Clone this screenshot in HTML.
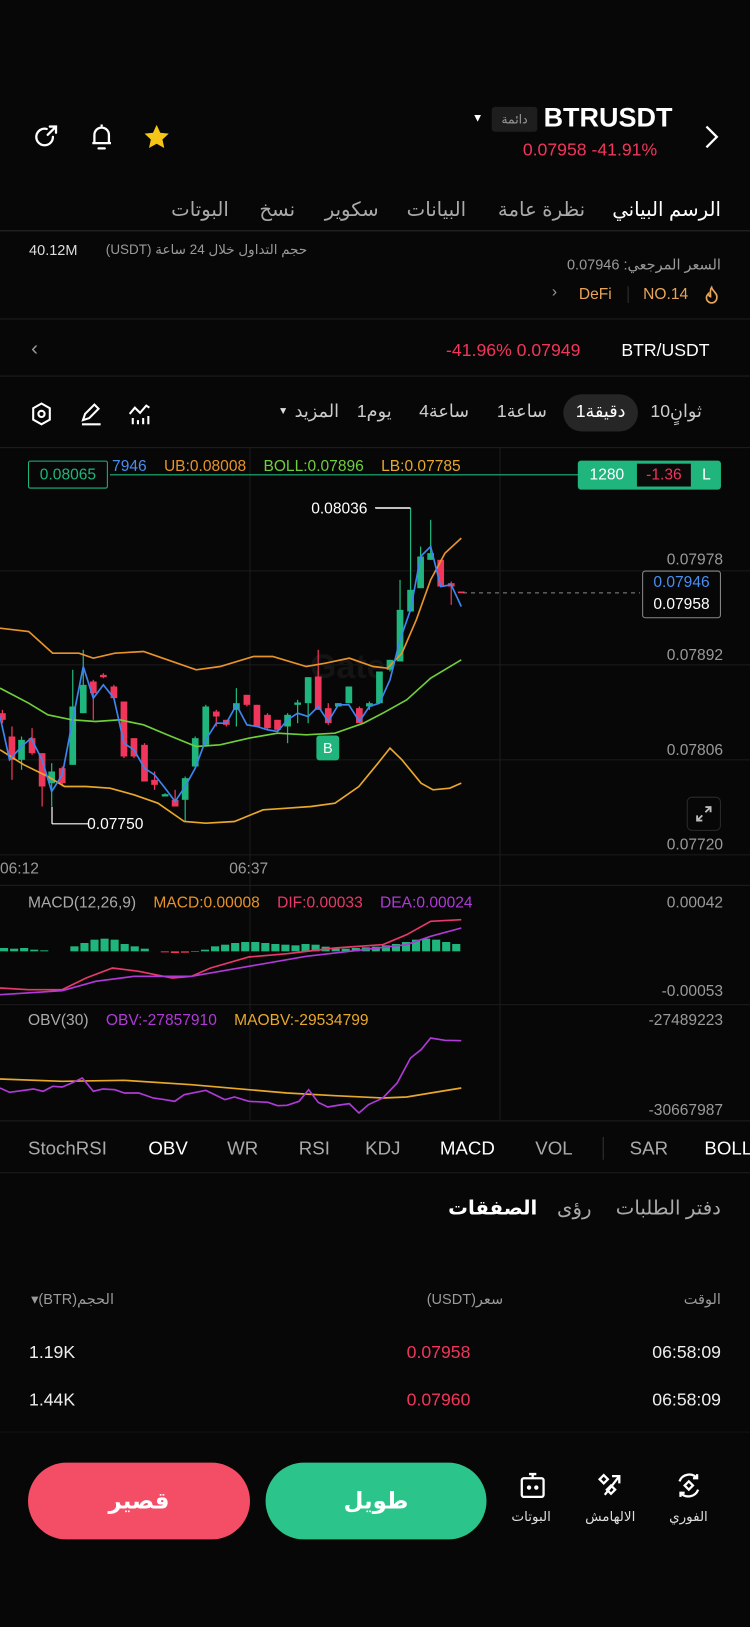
<!DOCTYPE html>
<html><head><meta charset="utf-8">
<style>
html,body{margin:0;padding:0;background:#070707;width:750px;height:1626px;overflow:hidden}
#w{position:absolute;left:0;top:0;width:723px;height:1568px;transform:scale(1.03735);transform-origin:0 0;font-family:"Liberation Sans","DejaVu Sans",sans-serif;color:#eee}
.a{position:absolute;white-space:nowrap}
.r{text-align:right}
.g{color:#9a9a9a}
.red{color:#f0365a}
.hl{position:absolute;left:0;width:723px;height:1px;background:#1e1e1e}
</style></head><body><div id="w">

<svg class="a" style="left:31px;top:119px" width="26" height="26" viewBox="0 0 26 26" fill="none" stroke="#fff" stroke-width="2.2" stroke-linecap="round"><path d="M20 13a8 8 0 1 1-6-7.7"/><path d="M15 11l8-8M17 3h6v6"/></svg>
<svg class="a" style="left:85px;top:117px" width="26" height="30" viewBox="0 0 26 30" fill="none" stroke="#fff" stroke-width="2.2"><path d="M13 3v2M6 21V13a7 7 0 0 1 14 0v8H4h18"/><path d="M10 26h6" stroke-linecap="round"/></svg>
<svg class="a" style="left:137px;top:118px" width="28" height="28" viewBox="0 0 24 24"><path d="M12 2l3 6.5 7 .8-5.2 4.8 1.5 7L12 17.6 5.7 21.1l1.5-7L2 9.3l7-.8z" fill="#f5c518"/></svg>
<div class="a" style="left:455px;top:108px;font-size:11px;color:#fff">▼</div>
<div class="a" style="left:474px;top:103px;width:44px;height:24px;background:#1e1e1e;border-radius:3px;font-size:12px;color:#999;text-align:center;line-height:24px">دائمة</div>
<div class="a" style="left:524px;top:98px;font-size:26px;font-weight:bold;color:#fff">BTRUSDT</div>
<div class="a red" style="left:504px;top:135px;font-size:17px">0.07958 -41.91%</div>
<svg class="a" style="left:678px;top:119px" width="16" height="26" viewBox="0 0 16 26" fill="none" stroke="#fff" stroke-width="2.2"><path d="M3 3l10 10-10 10"/></svg>

<div class="a" style="right:28px;top:191px;font-size:19px;color:#fff;direction:rtl">الرسم البياني</div>
<div class="a g" style="left:480px;top:191px;font-size:19px;color:#aaa">نظرة عامة</div>
<div class="a g" style="left:392px;top:191px;font-size:19px;color:#aaa">البيانات</div>
<div class="a g" style="left:313px;top:191px;font-size:19px;color:#aaa">سكوير</div>
<div class="a g" style="left:250px;top:191px;font-size:19px;color:#aaa">نسخ</div>
<div class="a g" style="left:165px;top:191px;font-size:19px;color:#aaa">البوتات</div>
<div class="hl" style="top:222px;background:#2a2a2a"></div>

<div class="a" style="left:28px;top:233px;font-size:14px;color:#ddd">40.12M</div>
<div class="a g" style="left:102px;top:233px;font-size:13px;direction:rtl">حجم التداول خلال 24 ساعة (USDT)</div>
<div class="a g" style="right:28px;top:247px;font-size:14px">السعر المرجعي: 0.07946</div>
<svg class="a" style="left:678px;top:275px" width="16" height="18" viewBox="0 0 16 18" fill="none" stroke="#e8a45a" stroke-width="1.6"><path d="M8 2c1 4 6 6 5 10a5 5 0 0 1-10 0c0-2 1-3 2-4 0 2 1 3 2 3 0-3-1-6 1-9z"/></svg>
<div class="a" style="left:620px;top:275px;font-size:15px;color:#e8a45a">NO.14</div>
<div class="a" style="left:605px;top:276px;width:1px;height:16px;background:#333"></div>
<div class="a" style="left:558px;top:275px;font-size:15px;color:#e8a45a">DeFi</div>
<div class="a g" style="left:532px;top:273px;font-size:15px">›</div>
<div class="hl" style="top:307px"></div>

<div class="a g" style="left:30px;top:325px;font-size:20px">‹</div>
<div class="a red" style="left:430px;top:328px;font-size:17px">-41.96% 0.07949</div>
<div class="a" style="left:599px;top:328px;font-size:17px;color:#fff">BTR/USDT</div>
<div class="hl" style="top:362px"></div>

<svg class="a" style="left:29px;top:387px" width="22" height="24" viewBox="0 0 22 24" fill="none" stroke="#fff" stroke-width="2"><path d="M11 2l8 4.5v11L11 22l-8-4.5v-11z"/><circle cx="11" cy="12" r="3"/></svg>
<svg class="a" style="left:76px;top:387px" width="24" height="24" viewBox="0 0 24 24" fill="none" stroke="#fff" stroke-width="2"><path d="M4 18l2-6 9-9 4 4-9 9-6 2zM3 22h18"/></svg>
<svg class="a" style="left:123px;top:387px" width="24" height="24" viewBox="0 0 24 24" fill="none" stroke="#fff" stroke-width="2"><path d="M2 12l5-6 5 5 6-7 3 2M5 22v-6M10 22v-4M15 22v-6M20 22v-8"/></svg>
<div class="a" style="left:268px;top:391px;font-size:10px;color:#ddd">▼</div>
<div class="a" style="left:284px;top:387px;font-size:17px;color:#ccc">المزيد</div>
<div class="a" style="left:344px;top:387px;font-size:17px;color:#ccc">1يوم</div>
<div class="a" style="left:404px;top:387px;font-size:17px;color:#ccc">4ساعة</div>
<div class="a" style="left:479px;top:387px;font-size:17px;color:#ccc">1ساعة</div>
<div class="a" style="left:543px;top:380px;width:72px;height:36px;background:#262626;border-radius:18px"></div>
<div class="a" style="left:555px;top:387px;font-size:17px;color:#fff">1دقيقة</div>
<div class="a" style="left:627px;top:387px;font-size:17px;color:#ccc">10ثوانٍ</div>
<div class="hl" style="top:431px"></div>

<svg class="a" style="left:0;top:424.2px" width="723" height="433.8" viewBox="0 0 750 450">
<g stroke="#1c1c1c" stroke-width="1"><line x1="0" y1="131" x2="750" y2="131"/><line x1="0" y1="225" x2="750" y2="225"/><line x1="0" y1="320" x2="750" y2="320"/><line x1="0" y1="415" x2="750" y2="415"/><line x1="250" y1="7" x2="250" y2="450"/><line x1="500" y1="7" x2="500" y2="450"/></g>
<text x="310" y="238" font-size="34" font-weight="bold" fill="#141414" font-family="Liberation Sans">Gate</text>
<line x1="110" y1="35" x2="580" y2="35" stroke="#1fb57c" stroke-width="1.2"/>
<g transform="scale(0.4785 0.33333)" id="cand"></g>
<line x1="463" y1="153" x2="640" y2="153" stroke="#888" stroke-width="1" stroke-dasharray="4 4"/>
<line x1="375" y1="68" x2="410" y2="68" stroke="#fff" stroke-width="1.2"/>
<line x1="52" y1="367" x2="52" y2="384" stroke="#fff" stroke-width="1.2"/>
<line x1="52" y1="384" x2="88" y2="384" stroke="#fff" stroke-width="1.2"/>
</svg>

<div class="a" style="left:27px;top:444px;width:77px;height:27px;border:1.3px solid #1fb57c;border-radius:2px;box-sizing:border-box;color:#1fb57c;font-size:15px;line-height:25px;text-align:center;background:#070707">0.08065</div>
<div class="a" style="left:108px;top:441px;font-size:15px"><span style="color:#4a8ef0">7946</span>&nbsp;&nbsp;&nbsp; <span style="color:#e8932a">UB:0.08008</span>&nbsp;&nbsp;&nbsp; <span style="color:#6fcf3a">BOLL:0.07896</span>&nbsp;&nbsp;&nbsp; <span style="color:#e8a82a">LB:0.07785</span></div>
<div class="a" style="left:557px;top:444px;width:138px;height:28px;background:#1fb57c;border-radius:3px"></div>
<div class="a" style="left:557px;top:444px;width:56px;height:28px;color:#fff;font-size:15px;line-height:28px;text-align:center">1280</div>
<div class="a" style="left:614px;top:447px;width:52px;height:22px;background:#0a0a0a;color:#f0365a;font-size:15px;line-height:22px;text-align:center">-1.36</div>
<div class="a" style="left:668px;top:444px;width:26px;height:28px;color:#fff;font-size:15px;line-height:28px;text-align:center">L</div>
<div class="a" style="left:300px;top:482px;font-size:15px;color:#fff">0.08036</div>
<div class="a" style="left:84px;top:786px;font-size:15px;color:#fff">0.07750</div>
<div class="a" style="left:305px;top:709px;width:22px;height:24px;background:#1fb57c;border-radius:3px;color:#fff;font-size:14px;text-align:center;line-height:24px">B</div>
<div class="a g r" style="right:26px;top:531px;font-size:15px">0.07978</div>
<div class="a g r" style="right:26px;top:623px;font-size:15px">0.07892</div>
<div class="a g r" style="right:26px;top:715px;font-size:15px">0.07806</div>
<div class="a g r" style="right:26px;top:806px;font-size:15px">0.07720</div>
<div class="a" style="left:619px;top:550px;width:76px;height:46px;border:1px solid #888;border-radius:3px;box-sizing:border-box;background:#070707;font-size:15px;text-align:center;line-height:21px"><span style="color:#4a8ef0">0.07946</span><br><span style="color:#fff">0.07958</span></div>
<div class="a" style="left:662px;top:768px;width:33px;height:33px;border:1px solid #2a2a2a;border-radius:5px;box-sizing:border-box"></div>
<svg class="a" style="left:670px;top:776px" width="17" height="17" viewBox="0 0 17 17" fill="none" stroke="#bbb" stroke-width="1.8"><path d="M10 2h5v5M15 2l-5 5M2 10v5h5M2 15l5-5"/></svg>
<div class="a g" style="left:0;top:829px;font-size:15px">06:12</div>
<div class="a g" style="left:221px;top:829px;font-size:15px">06:37</div>
<div class="hl" style="top:853px"></div>

<svg class="a" style="left:0;top:848.3px" width="723" height="289.2" viewBox="0 0 750 300">
<g stroke="#1c1c1c"><line x1="250" y1="5" x2="250" y2="240"/><line x1="500" y1="5" x2="500" y2="240"/><line x1="0" y1="125" x2="750" y2="125"/></g>
<g transform="scale(0.4785 0.33333)" id="sub"></g>
</svg>
<div class="a" style="left:27px;top:862px;font-size:15px"><span style="color:#aaa">MACD(12,26,9)</span>&nbsp;&nbsp;&nbsp; <span style="color:#e8932a">MACD:0.00008</span>&nbsp;&nbsp;&nbsp; <span style="color:#e83a6a">DIF:0.00033</span>&nbsp;&nbsp;&nbsp; <span style="color:#b03ad8">DEA:0.00024</span></div>
<div class="a g r" style="right:26px;top:862px;font-size:15px">0.00042</div>
<div class="a g r" style="right:26px;top:947px;font-size:15px">-0.00053</div>
<div class="a" style="left:27px;top:975px;font-size:15px"><span style="color:#aaa">OBV(30)</span>&nbsp;&nbsp;&nbsp; <span style="color:#b03ad8">OBV:-27857910</span>&nbsp;&nbsp;&nbsp; <span style="color:#e8a82a">MAOBV:-29534799</span></div>
<div class="a g r" style="right:26px;top:975px;font-size:15px">-27489223</div>
<div class="a g r" style="right:26px;top:1062px;font-size:15px">-30667987</div>
<div class="hl" style="top:1080px"></div>

<div class="a" style="left:27px;top:1097px;font-size:18px;color:#aaa">StochRSI</div>
<div class="a" style="left:143px;top:1097px;font-size:18px;color:#fff">OBV</div>
<div class="a" style="left:219px;top:1097px;font-size:18px;color:#aaa">WR</div>
<div class="a" style="left:288px;top:1097px;font-size:18px;color:#aaa">RSI</div>
<div class="a" style="left:352px;top:1097px;font-size:18px;color:#aaa">KDJ</div>
<div class="a" style="left:424px;top:1097px;font-size:18px;color:#fff">MACD</div>
<div class="a" style="left:516px;top:1097px;font-size:18px;color:#aaa">VOL</div>
<div class="a" style="left:581px;top:1096px;width:1px;height:22px;background:#333"></div>
<div class="a" style="left:607px;top:1097px;font-size:18px;color:#aaa">SAR</div>
<div class="a" style="left:679px;top:1097px;font-size:18px;color:#fff">BOLL</div>
<div class="hl" style="top:1130px"></div>

<div class="a" style="right:28px;top:1154px;font-size:19px;color:#aaa">دفتر الطلبات</div>
<div class="a" style="left:537px;top:1154px;font-size:19px;color:#aaa">رؤى</div>
<div class="a" style="left:432px;top:1154px;font-size:19px;color:#fff;font-weight:bold">الصفقات</div>
<div class="a g" style="right:28px;top:1244px;font-size:14px">الوقت</div>
<div class="a g" style="right:238px;top:1244px;font-size:14px;direction:rtl">سعر(USDT)</div>
<div class="a g" style="left:30px;top:1244px;font-size:14px">▾(BTR)الحجم</div>
<div class="a" style="left:28px;top:1294px;font-size:17px;color:#eee">1.19K</div>
<div class="a red" style="left:392px;top:1294px;font-size:17px">0.07958</div>
<div class="a" style="right:28px;top:1294px;font-size:17px;color:#eee">06:58:09</div>
<div class="a" style="left:28px;top:1340px;font-size:17px;color:#eee">1.44K</div>
<div class="a red" style="left:392px;top:1340px;font-size:17px">0.07960</div>
<div class="a" style="right:28px;top:1340px;font-size:17px;color:#eee">06:58:09</div>
<div class="hl" style="top:1380px;background:#141414"></div>

<div class="a" style="left:27px;top:1410px;width:214px;height:74px;border-radius:37px;background:#f44d66;color:#fff;font-size:22px;font-weight:bold;text-align:center;line-height:74px">قصير</div>
<div class="a" style="left:256px;top:1410px;width:213px;height:74px;border-radius:37px;background:#2bc48a;color:#fff;font-size:22px;font-weight:bold;text-align:center;line-height:74px">طويل</div>
<svg class="a" style="left:500px;top:1418px" width="27" height="28" viewBox="0 0 27 28" fill="none" stroke="#fff" stroke-width="2.2"><path d="M10 3h7M13.5 3v4"/><rect x="3" y="7" width="21" height="18" rx="2"/><circle cx="10" cy="16" r="1" fill="#fff"/><circle cx="17" cy="16" r="1" fill="#fff"/></svg>
<div class="a" style="left:493px;top:1454px;font-size:13px;color:#ddd">البوتات</div>
<svg class="a" style="left:573px;top:1418px" width="27" height="28" viewBox="0 0 27 28" fill="none" stroke="#fff" stroke-width="2.2"><path d="M5 8l4-4 4 4-4 4zM12 18l4-4 4 4-4 4zM10 23L24 5M17 5h7v7"/></svg>
<div class="a" style="left:564px;top:1454px;font-size:13px;color:#ddd">الالهامش</div>
<svg class="a" style="left:650px;top:1418px" width="28" height="28" viewBox="0 0 28 28" fill="none" stroke="#fff" stroke-width="2.2"><path d="M5 10a10 10 0 0 1 17-3M23 18a10 10 0 0 1-17 3M22 3v4h-4M6 25v-4h4"/><path d="M14 10l4 4-4 4-4-4z"/></svg>
<div class="a" style="left:645px;top:1454px;font-size:13px;color:#ddd">الفوري</div>

<script>
var ns="http://www.w3.org/2000/svg";
function el(p,t,a){var e=document.createElementNS(ns,t);for(var k in a)e.setAttribute(k,a[k]);p.appendChild(e);return e;}
function line(p,pts,c,w){el(p,"polyline",{points:pts.map(function(q){return q.join(",")}).join(" "),fill:"none",stroke:c,"stroke-width":w||1.6,"vector-effect":"non-scaling-stroke"});}
var g=document.getElementById("cand");
var C=[[5,820,840,810,850,0],[25,890,960,860,1020,0],[45,900,960,890,990,1],[67,895,940,865,945,0],[88,940,1040,940,1100,0],[108,995,1030,970,1100,1],[130,985,1030,980,1040,0],[152,800,975,690,975,1],[174,735,820,630,820,1],[195,725,760,720,840,0],[216,705,712,700,715,0],[238,740,775,735,775,0],[259,785,950,785,955,0],[280,895,950,895,955,0],[302,915,1025,910,1025,0],[323,1020,1035,995,1050,0],[345,1063,1070,1060,1070,1],[366,1080,1100,1050,1100,0],[387,1015,1080,1010,1145,1],[408,895,980,890,985,1],[430,800,915,795,920,1],[452,815,830,810,860,0],[473,840,855,840,860,0],[494,790,810,745,860,1],[516,765,795,765,800,0],[537,795,860,795,860,0],[559,825,865,820,870,0],[580,840,870,840,875,0],[601,825,860,820,910,1],[622,788,795,780,850,1],[644,712,790,712,850,1],[665,710,810,630,810,0],[686,805,850,790,855,0],[707,790,800,790,800,1],[729,740,790,740,790,1],[751,805,850,800,850,0],[772,790,800,785,810,1],[793,695,790,695,790,1],[815,660,690,660,695,1],[836,510,665,420,665,1],[858,450,515,205,515,1],[879,350,445,320,445,1],[900,340,360,240,360,1],[921,360,440,360,440,0],[943,430,440,425,495,0],[964,455,460,455,460,0]];
C.forEach(function(c){var col=c[5]?"#1fb57c":"#f0365a";
el(g,"line",{x1:c[0],x2:c[0],y1:c[3],y2:c[4],stroke:col,"stroke-width":1.2,"vector-effect":"non-scaling-stroke"});
el(g,"rect",{x:c[0]-7,y:c[1],width:14,height:Math.max(c[2]-c[1],4),fill:col});});
line(g,[[0,565],[60,575],[110,640],[165,640],[195,655],[240,640],[300,635],[350,660],[410,690],[460,680],[530,650],[570,650],[640,680],[680,670],[730,655],[780,680],[810,685],[840,640],[870,540],[900,420],[930,340],[964,295]],"#e8932a");
line(g,[[0,745],[60,790],[100,825],[150,840],[200,845],[250,840],[300,855],[350,885],[410,920],[460,915],[520,895],[580,880],[640,885],[700,880],[760,850],[800,820],[850,780],[900,715],[964,660]],"#6fcf3a");
line(g,[[0,930],[50,975],[100,1010],[135,1040],[180,1040],[230,1045],[280,1065],[330,1090],[385,1145],[430,1150],[490,1145],[550,1110],[600,1105],[650,1100],[700,1090],[750,1040],[790,970],[815,925],[840,960],[880,1030],[905,1050],[940,1045],[964,1030]],"#e8a82a");
line(g,[[0,830],[20,960],[45,920],[65,895],[88,960],[108,1055],[130,1005],[152,840],[174,680],[195,775],[216,735],[238,775],[259,910],[280,930],[302,985],[323,1005],[345,1045],[366,1085],[387,1040],[408,985],[430,900],[452,850],[473,850],[494,795],[516,855],[537,860],[559,870],[580,875],[601,840],[622,820],[644,830],[665,800],[686,845],[707,795],[729,795],[751,845],[772,800],[793,790],[815,720],[836,600],[858,510],[879,350],[900,320],[921,440],[943,435],[964,500]],"#3d86f0");
line(g,[[785,205],[858,205]],"#fff",1.2);
var s=document.getElementById("sub");
var H=[10,8,10,5,3,0,0,15,25,35,38,35,22,15,8,0,-3,-5,-4,-2,5,15,20,25,28,28,25,22,20,18,22,20,14,10,8,10,12,14,18,22,28,35,38,35,28,22];
H.forEach(function(h,i){var x=i*21;if(h==0)return;
el(s,"rect",{x:x,y:h>0?215-h:215,width:17,height:Math.abs(h),fill:h>0?"#1fb57c":"#f0365a"});});
line(s,[[0,325],[60,330],[130,330],[180,295],[235,265],[290,275],[360,295],[400,290],[440,265],[520,232],[600,222],[700,205],[800,195],[850,165],[900,125],[964,120]],"#e83a6a");
line(s,[[0,345],[130,333],[200,305],[280,290],[400,290],[520,260],[640,230],[760,210],[850,195],[900,170],[964,145]],"#b03ad8");
line(s,[[0,598],[130,605],[260,602],[400,615],[520,630],[600,640],[700,648],[800,655],[850,652],[900,640],[964,625]],"#e8a82a");
line(s,[[0,625],[20,638],[70,628],[90,635],[110,620],[130,622],[150,610],[172,595],[195,635],[215,628],[240,630],[260,640],[290,640],[320,655],[345,660],[365,665],[385,645],[430,632],[470,660],[490,652],[520,665],[560,668],[580,678],[600,677],[625,665],[645,630],[665,668],[685,682],[710,676],[730,672],[750,700],[770,675],[800,655],[830,610],[858,535],[880,510],[900,475],[930,482],[964,483]],"#b03ad8");
</script>
</div></body></html>
